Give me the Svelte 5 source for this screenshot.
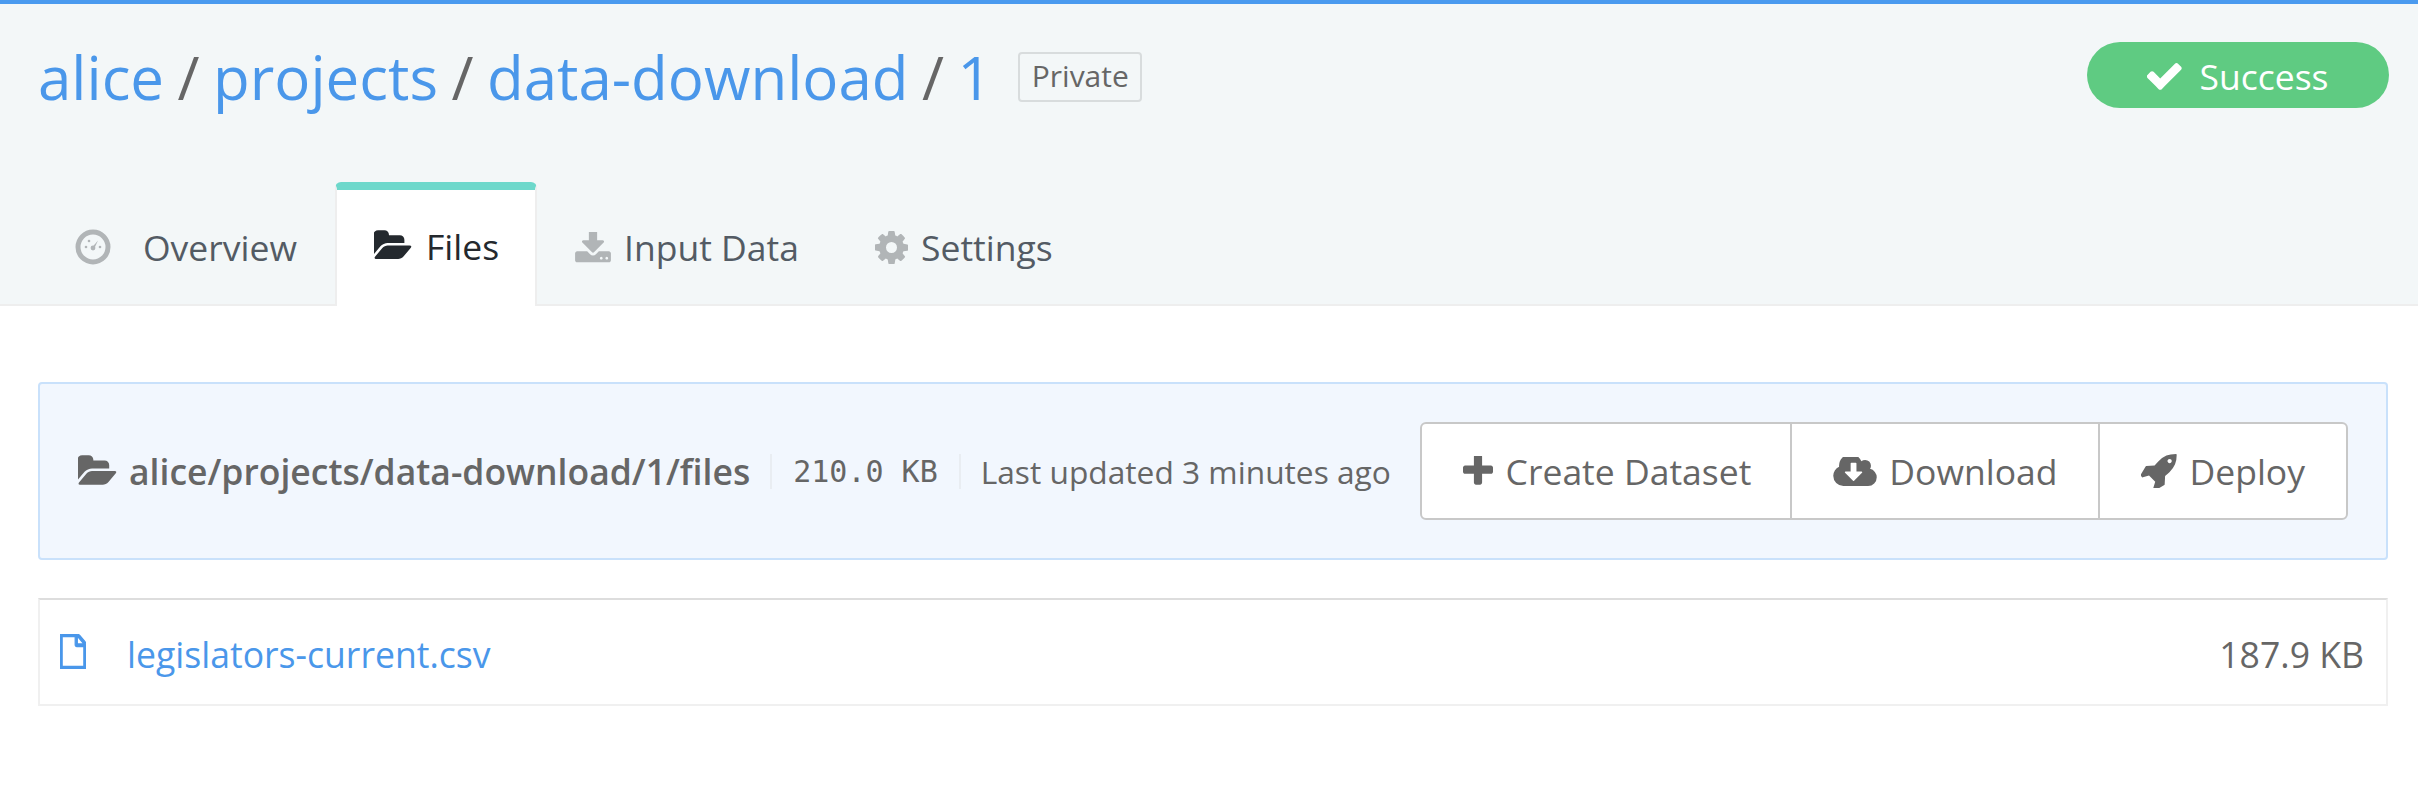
<script>
  const tabs = [
    { id: 'overview', label: 'Overview' },
    { id: 'files', label: 'Files', active: true },
    { id: 'input', label: 'Input Data' },
    { id: 'settings', label: 'Settings' }
  ];
</script>

{#snippet icon(name)}
  {#if name === 'overview'}
    <svg class="ic ic-overview" viewBox="0 0 36 36">
      <circle cx="18" cy="18" r="15" fill="#f3f7f8" stroke="#b1b5b7" stroke-width="5" />
      <circle cx="18" cy="19" r="2.4" fill="#b1b5b7" />
      <path d="M17 18.500 L23 11.500 L19 20 Z" fill="#b1b5b7" />
      <circle cx="11" cy="18" r="1.300" fill="#b1b5b7" />
      <circle cx="14" cy="12" r="1.300" fill="#b1b5b7" />
      <circle cx="25" cy="18" r="1.300" fill="#b1b5b7" />
    </svg>
  {:else if name === 'files'}
    <svg class="ic ic-folder" viewBox="0 0 1920 1792"><path d="M1845 931q0 35-53 92l-336 396q-43 51-120.500 86.500t-143.500 35.500h-1088q-34 0-60.500-13t-26.500-43q0-35 53-92l336-396q43-51 120.500-86.500t143.500-35.500h1088q34 0 60.500 13t26.500 43zm-343-345v160h-832q-94 0-197 47.500t-164 119.500l-337 396-5 6q0-4-.5-12.500t-.5-12.500v-960q0-92 66-158t158-66h320q92 0 158 66t66 158v32h544q92 0 158 66t66 158z" /></svg>
  {:else if name === 'input'}
    <svg class="ic ic-input" viewBox="64 128 1664 1440"><path d="M1344 1344q0-26-19-45t-45-19-45 19-19 45 19 45 45 19 45-19 19-45zm256 0q0-26-19-45t-45-19-45 19-19 45 19 45 45 19 45-19 19-45zm128-224v320q0 40-28 68t-68 28h-1472q-40 0-68-28t-28-68v-320q0-40 28-68t68-28h465l135 136q58 56 136 56t136-56l136-136h464q40 0 68 28t28 68zm-325-569q17 41-14 70l-448 448q-18 19-45 19t-45-19l-448-448q-31-29-14-70 17-39 59-39h256v-448q0-26 19-45t45-19h256q26 0 45 19t19 45v448h256q42 0 59 39z" /></svg>
  {:else if name === 'settings'}
    <svg class="ic ic-cog" viewBox="128 128 1536 1536"><path d="M1152 896q0-106-75-181t-181-75-181 75-75 181 75 181 181 75 181-75 75-181zm512-109v222q0 12-8 23t-20 13l-185 28q-19 54-39 91 35 50 107 138 10 12 10 25t-9 23q-27 37-99 108t-94 71q-12 0-26-9l-138-108q-44 23-91 38-16 136-29 186-7 28-36 28h-222q-14 0-24.500-8.500t-11.500-21.500l-28-184q-49-16-90-37l-141 107q-10 9-25 9-14 0-25-11-126-114-165-168-7-10-7-23 0-12 8-23 15-21 51-66.500t54-70.500q-27-50-41-99l-183-27q-13-2-21-12.500t-8-23.500v-222q0-12 8-23t19-13l186-28q14-46 39-92-40-57-107-138-10-12-10-24 0-10 9-23 26-36 98.500-107.500t94.500-71.500q13 0 26 10l138 107q44-23 91-38 16-136 29-186 7-28 36-28h222q14 0 24.500 8.500t11.500 21.500l28 184q49 16 90 37l142-107q9-9 24-9 13 0 25 10 129 119 165 170 7 8 7 22 0 12-8 23-15 21-51 66.500t-54 70.500q26 50 41 98l183 28q13 2 21 12.500t8 23.500z" /></svg>
  {/if}
{/snippet}

<div class="page">
  <header class="head">
    <div class="top">
      <div class="crumbs">
        <a href="#alice">alice</a>
        <span class="sl">/</span>
        <a href="#projects">projects</a>
        <span class="sl">/</span>
        <a href="#project">data-download</a>
        <span class="sl">/</span>
        <a href="#run">1</a>
        <span class="badge">Private</span>
      </div>
      <div class="status">
        <svg viewBox="128 256 1600 1216"><path d="M1671 566q0 40-28 68l-724 724-136 136q-28 28-68 28t-68-28l-136-136-362-362q-28-28-28-68t28-68l136-136q28-28 68-28t68 28l294 295 656-657q28-28 68-28t68 28l136 136q28 28 28 68z" /></svg>
        <span>Success</span>
      </div>
    </div>
    <nav class="tabs">
      {#each tabs as t}
        <a href="#{t.id}" class="tab tab-{t.id}" class:active={t.active}>
          {@render icon(t.id)}
          <span>{t.label}</span>
        </a>
      {/each}
    </nav>
  </header>

  <main class="body">
    <section class="panel">
      <div class="info">
        <svg class="pf" viewBox="0 0 1920 1792"><path d="M1845 931q0 35-53 92l-336 396q-43 51-120.500 86.500t-143.500 35.500h-1088q-34 0-60.500-13t-26.500-43q0-35 53-92l336-396q43-51 120.500-86.500t143.500-35.500h1088q34 0 60.500 13t26.500 43zm-343-345v160h-832q-94 0-197 47.500t-164 119.500l-337 396-5 6q0-4-.5-12.500t-.5-12.500v-960q0-92 66-158t158-66h320q92 0 158 66t66 158v32h544q92 0 158 66t66 158z" /></svg>
        <strong>alice/projects/data-download/1/files</strong>
        <span class="size">210.0 KB</span>
        <span class="updated">Last updated 3 minutes ago</span>
      </div>
      <div class="btns">
        <button class="b1">
          <svg class="b-plus" viewBox="192 192 1408 1408"><path d="M1600 736v192q0 40-28 68t-68 28h-416v416q0 40-28 68t-68 28h-192q-40 0-68-28t-28-68v-416h-416q-40 0-68-28t-28-68v-192q0-40 28-68t68-28h416v-416q0-40 28-68t68-28h192q40 0 68 28t28 68v416h416q40 0 68 28t28 68z" /></svg>
          Create Dataset
        </button>
        <button>
          <svg class="b-cloud" viewBox="0 256 1920 1280"><path d="M1280 928q0-14-9-23t-23-9h-224v-352q0-13-9.500-22.500t-22.500-9.500h-192q-13 0-22.500 9.500t-9.500 22.500v352h-224q-13 0-22.500 9.500t-9.500 22.500q0 14 9 23l352 352q9 9 23 9t23-9l351-351q10-12 10-24zm640 224q0 159-112.500 271.500t-271.500 112.500h-1088q-185 0-316.500-131.500t-131.500-316.500q0-130 70-240t188-165q-2-30-2-43 0-212 150-362t362-150q156 0 285.500 87t188.500 231q71-62 166-62 106 0 181 75t75 181q0 76-41 138 130 31 213.500 135.500t83.500 238.500z" /></svg>
          Download
        </button>
        <button>
          <svg class="b-rocket" viewBox="128 128 1600 1536"><path d="M1504 448q0-40-28-68t-68-28-68 28-28 68 28 68 68 28 68-28 28-68zm224-288q0 249-75.500 430.500t-253.500 360.500q-81 80-195 176l-20 379q-2 16-16 26l-384 224q-7 4-16 4-12 0-23-9l-64-64q-13-14-8-32l85-276-281-281-276 85q-3 1-9 1-14 0-23-9l-64-64q-17-19-5-39l224-384q10-14 26-16l379-20q96-114 176-195 188-187 358-258t431-71q14 0 24 9.500t10 22.500z" /></svg>
          Deploy
        </button>
      </div>
    </section>

    <section class="list">
      <div class="row">
        <svg class="f" viewBox="128 0 1536 1792" preserveAspectRatio="none"><path d="M1596 380q28 28 48 76t20 88v1152q0 40-28 68t-68 28h-1344q-40 0-68-28t-28-68v-1600q0-40 28-68t68-28h896q40 0 88 20t76 48zm-444-244v376h376q-10-29-22-41l-313-313q-12-12-41-22zm384 1528v-1024h-416q-40 0-68-28t-28-68v-416h-768v1536h1280z" stroke="#4a97ea" stroke-width="70" /></svg>
        <a href="#file">legislators-current.csv</a>
        <span class="fsize">187.9 KB</span>
      </div>
    </section>
  </main>
</div>

<style>
  :global(body) {
    margin: 0;
    background: #fff;
  }

  .page {
    font-family: 'Open Sans', sans-serif;
    color: #666;
  }

  a {
    color: #4a97ea;
    text-decoration: none;
  }

  .head {
    background: #f3f7f8;
    border-top: 4px solid #4a9aef;
    border-bottom: 2px solid #eeeeee;
    height: 300px;
    display: flex;
    flex-direction: column;
    justify-content: space-between;
  }

  .top {
    display: flex;
    justify-content: space-between;
    align-items: flex-start;
    padding: 35px 29px 0 38px;
  }

  .crumbs {
    display: flex;
    align-items: center;
    gap: 13.500px;
    font-size: 60px;
    font-weight: 400;
    line-height: 76px;
    height: 76px;
  }

  .sl {
    color: #666;
  }

  .badge {
    margin-left: 13px;
    box-sizing: border-box;
    height: 50px;
    width: 124px;
    border: 2px solid #d8dcdd;
    border-radius: 4px;
    font-size: 30px;
    font-weight: 400;
    line-height: 44px;
    text-align: center;
  }

  .status {
    box-sizing: border-box;
    width: 302px;
    height: 66px;
    margin-top: 3px;
    background: #5fcb82;
    color: #fff;
    border-radius: 33px;
    display: flex;
    align-items: center;
    justify-content: center;
    gap: 16px;
    font-size: 35.500px;
  }

  .status span {
    padding-top: 2px;
  }

  .status svg {
    width: 36px;
    height: 30px;
    fill: #fff;
  }

  .tabs {
    display: flex;
    align-items: flex-end;
    padding-left: 38px;
    margin-bottom: -2px;
  }

  .tab {
    display: flex;
    align-items: center;
    box-sizing: border-box;
    height: 124px;
    padding: 6px 0 0;
    font-size: 35.500px;
    color: #535b64;
  }

  .tab-overview {
    width: 297px;
    padding-left: 37px;
    gap: 32px;
  }

  .tab-files {
    width: 202px;
    padding-left: 37px;
    gap: 13px;
  }

  .tab-input {
    width: 338px;
    padding-left: 38px;
    gap: 13px;
  }

  .tab-settings {
    gap: 13px;
  }

  .tab.active {
    background: #fff;
    color: #24292e;
    border: 2px solid #eeeeee;
    border-top: 8px solid #6dd8cb;
    border-bottom: 0;
    border-radius: 6px 6px 0 0;
    padding: 0 0 4px 37px;
  }

  .ic {
    fill: #b1b5b7;
    flex: none;
  }

  .ic-overview {
    width: 36px;
    height: 36px;
  }

  .ic-folder {
    width: 39px;
    height: 36px;
    fill: #24292e;
  }

  .ic-input {
    width: 36px;
    height: 31px;
  }

  .ic-cog {
    width: 33px;
    height: 33px;
  }

  .body {
    padding: 75px 30px 0 38px;
  }

  .panel {
    box-sizing: border-box;
    height: 178px;
    background: #f2f7fe;
    border: 2px solid #c9e1fb;
    border-radius: 4px;
    display: flex;
    align-items: center;
    justify-content: space-between;
    padding: 0 38px;
    margin-top: 1px;
  }

  .info {
    display: flex;
    align-items: center;
    font-size: 31.700px;
  }

  .pf {
    width: 40px;
    height: 37px;
    fill: #666;
    margin-right: 11px;
  }

  strong {
    font-weight: 600;
    font-size: 35.500px;
    padding-right: 20px;
  }

  .size {
    font-family: 'DejaVu Sans Mono', monospace;
    font-size: 30px;
    padding: 0 21px;
    border-left: 2px solid #e9edf2;
    border-right: 2px solid #e9edf2;
  }

  .updated {
    padding-left: 20px;
  }

  .btns {
    display: flex;
    box-sizing: border-box;
    height: 98px;
    border: 2px solid #c8c8c8;
    border-radius: 6px;
    background: #fff;
  }

  button {
    display: flex;
    align-items: center;
    gap: 12px;
    background: none;
    border: 0;
    border-left: 2px solid #c8c8c8;
    padding: 0 41px;
    font: inherit;
    font-size: 35.500px;
    color: #666;
  }

  button:first-child {
    border-left: 0;
  }

  .b1 {
    gap: 13px;
    padding-right: 39px;
  }

  button svg {
    fill: #666;
  }

  .b-plus {
    width: 30px;
    height: 30px;
  }

  .b-cloud {
    width: 44px;
    height: 29px;
  }

  .b-rocket {
    width: 36px;
    height: 34px;
  }

  .list {
    margin-top: 38px;
  }

  .row {
    box-sizing: border-box;
    height: 108px;
    display: flex;
    align-items: center;
    border: 2px solid #f0f0f0;
    border-top-color: #dddddd;
    padding: 4px 22px 0 20px;
    font-size: 35.600px;
  }

  .f {
    width: 26px;
    height: 35px;
    fill: #4a97ea;
    margin-right: 41px;
    margin-top: -6px;
  }

  .fsize {
    margin-left: auto;
  }
</style>
